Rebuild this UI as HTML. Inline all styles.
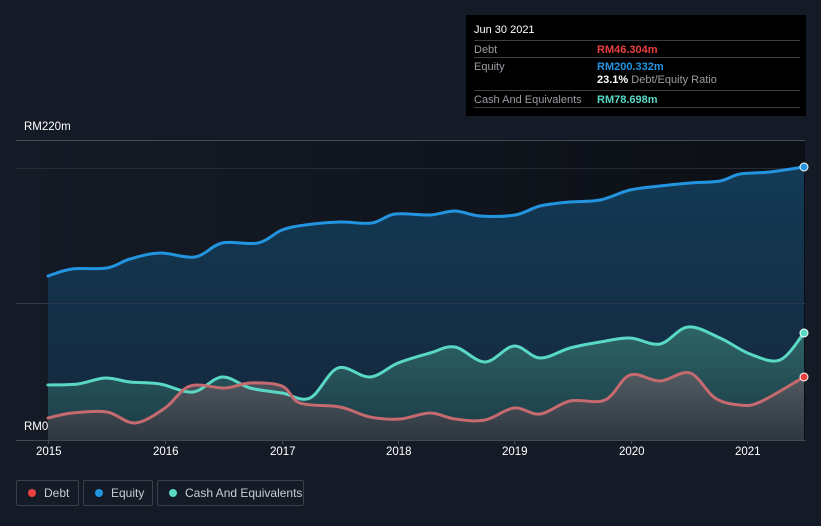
<!DOCTYPE html>
<html><head><meta charset="utf-8"><style>
body{margin:0;background:#151b26;font-family:"Liberation Sans",sans-serif;}
.wrap{position:relative;width:821px;height:526px;overflow:hidden;background:#151b26}
.tt{position:absolute;left:466px;top:15px;width:340px;height:101px;background:#000;color:#fff;font-size:11px}
.tt .row{position:absolute;left:8px;right:6px;border-top:1px solid #3a3d44;height:17px}
.tt .l{position:absolute;left:0;top:3px;color:#9a9da3}
.tt .v{position:absolute;left:123px;top:3px;font-weight:bold}
.leg{position:absolute;top:480px;height:26px;border:1px solid #3a404b;border-radius:2px;color:#c9ccd1;font-size:12px;box-sizing:border-box;line-height:24px}
.leg i{position:absolute;left:11px;top:8px;width:8px;height:8px;border-radius:50%}
.leg span{position:absolute;left:27px}
.ax{position:absolute;color:#fff;font-size:11.5px}
</style></head><body><div class="wrap">
<svg width="821" height="526" style="position:absolute;left:0;top:0">
<defs>
<linearGradient id="bg" x1="0" x2="1" y1="0" y2="0"><stop offset="0" stop-color="#151b26"/><stop offset="1" stop-color="#0c0f15"/></linearGradient>
<linearGradient id="eq" x1="0" x2="0" y1="0" y2="1"><stop offset="0" stop-color="#133a55"/><stop offset="1" stop-color="#14273c"/></linearGradient>
<linearGradient id="ca" x1="0" x2="0" y1="0" y2="1"><stop offset="0" stop-color="#2d6466"/><stop offset="1" stop-color="#1b3a45"/></linearGradient>
<linearGradient id="de" x1="0" x2="0" y1="0" y2="1"><stop offset="0" stop-color="#585c64"/><stop offset="1" stop-color="#30363f"/></linearGradient>
</defs>
<rect x="16" y="140" width="789" height="300" fill="url(#bg)"/>
<line x1="16" y1="140.5" x2="805" y2="140.5" stroke="#444a52"/>
<line x1="16" y1="168.5" x2="805" y2="168.5" stroke="#252a33"/>
<path id="fe" fill="url(#eq)"/>
<line x1="16" y1="303.5" x2="805" y2="303.5" stroke="#2a3a4c"/>
<path id="fc" fill="url(#ca)"/>
<path id="fd" fill="url(#de)" fill-opacity="0.9"/>
<g fill="none" stroke-width="3" stroke-linejoin="round" stroke-linecap="round">
<path id="le" stroke="#2394df"/>
<path id="lc" stroke="#5ad8c6"/>
<path id="ld" stroke="#c56a6e"/>
</g>
<line x1="16" y1="440.5" x2="805" y2="440.5" stroke="#444a52"/>
<g stroke="#444a52"><line x1="48.5" y1="440" x2="48.5" y2="444"/><line x1="165.5" y1="440" x2="165.5" y2="444"/><line x1="282.5" y1="440" x2="282.5" y2="444"/><line x1="398.5" y1="440" x2="398.5" y2="444"/><line x1="514.5" y1="440" x2="514.5" y2="444"/><line x1="631.5" y1="440" x2="631.5" y2="444"/><line x1="747.5" y1="440" x2="747.5" y2="444"/></g>
<circle cx="804" cy="167" r="4" fill="#2394df" stroke="#fff" stroke-width="1"/>
<circle cx="804" cy="333" r="4" fill="#5ad8c6" stroke="#fff" stroke-width="1"/>
<circle cx="804" cy="377" r="4" fill="#e8403f" stroke="#fff" stroke-width="1"/>
</svg>
<div class="ax" style="left:24px;top:121px">RM220m</div>
<div class="ax" style="left:24px;top:421px">RM0</div>
<div class="ax" style="left:36px;top:446px">2015</div>
<div class="ax" style="left:153px;top:446px">2016</div>
<div class="ax" style="left:270px;top:446px">2017</div>
<div class="ax" style="left:386px;top:446px">2018</div>
<div class="ax" style="left:502px;top:446px">2019</div>
<div class="ax" style="left:619px;top:446px">2020</div>
<div class="ax" style="left:735px;top:446px">2021</div>
<div class="tt">
<div style="position:absolute;left:8px;top:9px">Jun 30 2021</div>
<div class="row" style="top:25px"><span class="l">Debt</span><span class="v" style="color:#e8403f">RM46.304m</span></div>
<div class="row" style="top:42px"><span class="l">Equity</span><span class="v" style="color:#2394df">RM200.332m</span></div>
<div style="position:absolute;left:131px;top:59px"><b>23.1%</b> <span style="color:#9a9da3">Debt/Equity Ratio</span></div>
<div class="row" style="top:75px"><span class="l">Cash And Equivalents</span><span class="v" style="color:#5ad8c6">RM78.698m</span></div>
<div class="row" style="top:92px;border-top:1px solid #3a3d44;height:0"></div>
</div>
<div class="leg" style="left:16px;width:63px"><i style="background:#e8403f"></i><span>Debt</span></div>
<div class="leg" style="left:83px;width:70px"><i style="background:#2394df"></i><span>Equity</span></div>
<div class="leg" style="left:157px;width:147px"><i style="background:#5ad8c6"></i><span>Cash And Equivalents</span></div>
</div>
<script>
function sm(s){var p=s.trim().split(/\s+/).map(function(a){return a.split(',').map(Number)});
var d='M'+p[0][0]+','+p[0][1];
for(var i=0;i<p.length-1;i++){var p0=p[i-1]||p[i],p1=p[i],p2=p[i+1],p3=p[i+2]||p2;
var c1x=p1[0]+(p2[0]-p0[0])/6,c1y=p1[1]+(p2[1]-p0[1])/6,c2x=p2[0]-(p3[0]-p1[0])/6,c2y=p2[1]-(p3[1]-p1[1])/6;
d+=' C'+c1x+','+c1y+' '+c2x+','+c2y+' '+p2[0]+','+p2[1];}return d;}
var E="48,276 72,269 107,268 130,259 160,253 195,257 222,243 258,243 282,230 305,225 340,222 372,223 395,214 430,215 455,211 480,216 515,215 540,206 570,202 600,200 630,190 660,186 690,183 720,181 740,174 770,172 804,167";
var C="48,385 78,384 105,378 130,382 160,384 193,392 222,377 250,388 282,393 310,398 338,368 370,377 398,363 430,353 455,347 485,362 514,346 540,358 570,348 600,342 630,338 660,344 688,327 720,338 750,354 780,360 804,333";
var D="48,418 72,413 107,412 135,423 165,408 190,386 225,388 250,383 282,386 300,403 340,407 370,417 400,419 430,413 455,419 485,420 514,408 540,414 570,401 605,400 630,375 660,381 690,373 715,398 740,405 760,402 804,377";
[[E,'e'],[C,'c'],[D,'d']].forEach(function(a){var d=sm(a[0]);
document.getElementById('l'+a[1]).setAttribute('d',d);
document.getElementById('f'+a[1]).setAttribute('d',d+' L804,440 L48,440 Z');});
</script>
</body></html>
